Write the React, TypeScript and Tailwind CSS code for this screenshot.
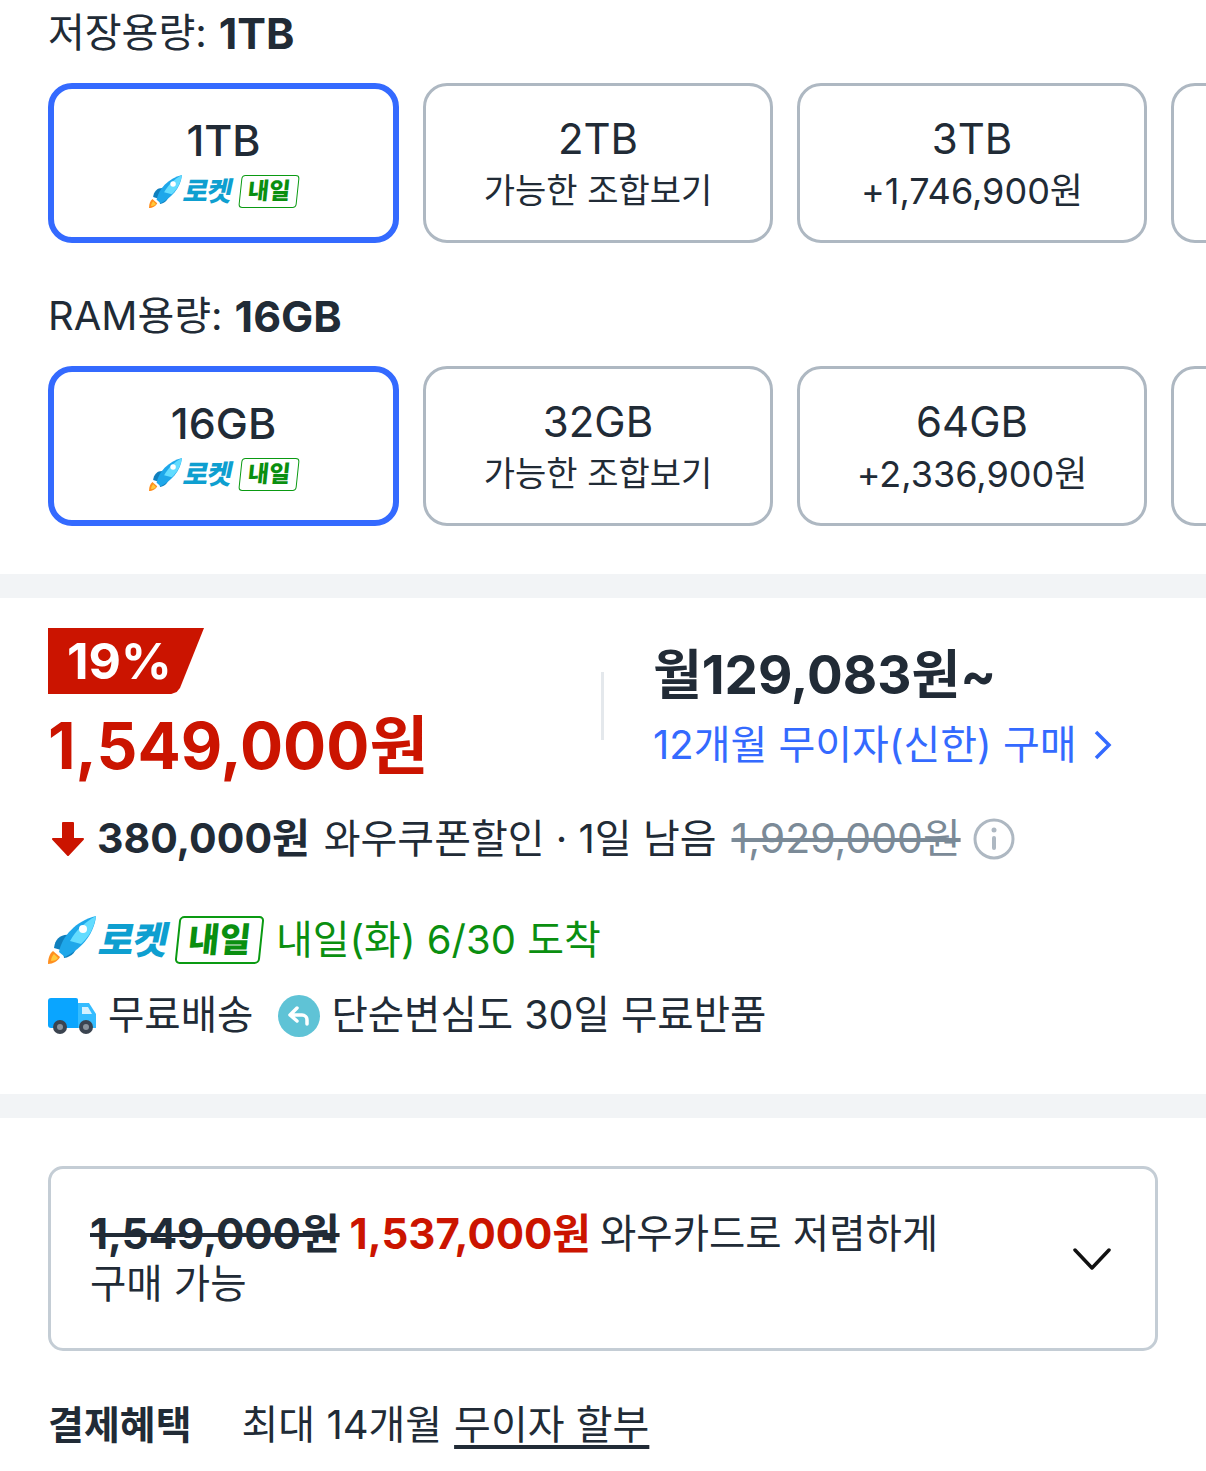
import React from 'react';

const FONT = "font-['Inter','Noto_Sans_CJK_KR',sans-serif]";

const RocketIcon = ({ className }: { className: string }) => (
  <svg viewBox="0 0 48 48" className={className}>
    <path d="M0 48c0-6 2-11 5-13l7 6c-2 4-7 7-12 7z" fill="#ff8f1f" />
    <path d="M3 45c0-3 2-6 3-7l4 4c-1 2-4 3-7 3z" fill="#ffc93c" />
    <path d="M6 32c1-9 7-14 15-13l-8 15z" fill="#0f7fbd" />
    <path d="M16 42c8-1 13-7 13-15l-14 8z" fill="#0f7fbd" />
    <path d="M11 36C14 20 28 5 48 0c-2 20-17 34-31 41z" fill="#1ea7ea" />
    <path d="M22 25C28 14 37 6 48 0c-2 12-7 21-15 28z" fill="#63dcff" />
    <circle cx="35" cy="13" r="4" fill="#fff" />
  </svg>
);

const RocketBadge = ({ large }: { large?: boolean }) =>
  large ? (
    <div className="flex items-center">
      <RocketIcon className="h-[48px] w-[48px]" />
      <span className="ml-[4px] inline-block -skew-x-12 text-[38px] leading-[48px] font-black tracking-[-1px] text-[#0e9fd0]">로켓</span>
      <span className="ml-[9px] flex h-[48px] w-[85px] -skew-x-6 items-center justify-center rounded-[5px] border-2 border-[#0a9a12] text-[34px] leading-none font-black text-[#0a8f10]">
        내일
      </span>
    </div>
  ) : (
    <div className="flex items-center">
      <RocketIcon className="h-[33px] w-[33px]" />
      <span className="ml-[2px] inline-block -skew-x-12 text-[27px] leading-[33px] font-black tracking-[-1px] text-[#0e9fd0]">로켓</span>
      <span className="ml-[8px] flex h-[33px] w-[58px] -skew-x-6 items-center justify-center rounded-[4px] border border-[#0a9a12] text-[23px] leading-none font-black text-[#0a8f10]">
        내일
      </span>
    </div>
  );

const OptionCard = ({ title, sub, subClass }: { title: string; sub: string; subClass: string }) => (
  <div className="flex h-[160px] w-[350px] shrink-0 flex-col items-center justify-center rounded-[24px] border-[3px] border-[#aeb8c2] pt-[2px]">
    <div className="text-[42px] leading-[54px]">{title}</div>
    <div className={`${subClass} leading-[50px]`}>{sub}</div>
  </div>
);

const OptionRow = ({ label, value, selected, mid, last }: { label: string; value: string; selected: string; mid: string; last: { title: string; sub: string } }) => (
  <div>
    <div className="flex h-[46px] items-center text-[40px] leading-[46px]">
      {label}:<span className="ml-[12px] text-[43px] font-bold">{value}</span>
    </div>
    <div className="mt-[27px] flex gap-[24px] overflow-hidden">
      <div className="flex h-[160px] w-[351px] shrink-0 flex-col items-center justify-center rounded-[24px] border-[6px] border-[#346aff] pb-[5px]">
        <div className="text-[43px] leading-[52px] font-medium">{selected}</div>
        <div className="mt-[9px]">
          <RocketBadge />
        </div>
      </div>
      <OptionCard title={mid} sub="가능한 조합보기" subClass="text-[34px]" />
      <OptionCard title={last.title} sub={last.sub} subClass="text-[36px]" />
      <div className="h-[160px] w-[350px] shrink-0 rounded-[24px] border-[3px] border-[#aeb8c2]" />
    </div>
  </div>
);

export default function App() {
  return (
    <div className={`${FONT} h-[1471px] overflow-hidden bg-white text-[#212b36]`}>
      <div className="pt-[10px] pl-[48px]">
        <OptionRow label="저장용량" value="1TB" selected="1TB" mid="2TB" last={{ title: '3TB', sub: '+1,746,900원' }} />
        <div className="mt-[50px]">
          <OptionRow label="RAM용량" value="16GB" selected="16GB" mid="32GB" last={{ title: '64GB', sub: '+2,336,900원' }} />
        </div>
      </div>

      <div className="mt-[48px] h-[24px] bg-[#f2f4f6]" />

      {/* price */}
      <div className="h-[496px] px-[48px] pt-[30px]">
        <div className="flex">
          <div className="w-[553px] shrink-0">
            <div className="flex h-[66px] w-[156px] items-center bg-[#cb1400] pl-[19px] text-[50px] leading-none font-bold text-white [clip-path:polygon(0_0,100%_0,84.6%_91%,82.5%_97%,79%_100%,0_100%)]">
              19%
            </div>
            <div className="mt-[15px] text-[64px] leading-[74px] font-bold text-[#cb1400]">1,549,000원</div>
          </div>
          <div className="mt-[44px] h-[68px] w-[3px] bg-[#e4e8ec]" />
          <div className="ml-[49px] pt-[15px]">
            <div className="text-[53px] leading-[64px] font-bold">월129,083원~</div>
            <div className="mt-[10px] flex items-center text-[40px] leading-[56px] text-[#346aff]">
              12개월 무이자(신한) 구매
              <svg viewBox="0 0 20 32" className="ml-[16px] h-[32px] w-[20px]" fill="none" stroke="#346aff" strokeWidth="3.5">
                <path d="M3 3l13 13L3 29" />
              </svg>
            </div>
          </div>
        </div>

        <div className="mt-[28px] flex h-[56px] items-center text-[40px]">
          <svg viewBox="0 0 34 34" className="ml-[3px] h-[34px] w-[34px]">
            <path d="M12 1h10v16h10L17 33 2 17h10z" fill="#cb1400" stroke="#cb1400" strokeWidth="2" strokeLinejoin="round" />
          </svg>
          <span className="ml-[12px] text-[41px] font-bold">380,000원</span>
          <span className="ml-[14px]">와우쿠폰할인 · 1일 남음</span>
          <span className="ml-[15px] text-[41px] text-[#7b8a97] line-through">1,929,000원</span>
          <svg viewBox="0 0 42 42" className="ml-[12px] h-[42px] w-[42px]" fill="none">
            <circle cx="21" cy="21" r="19" stroke="#aeb8c2" strokeWidth="3" />
            <circle cx="21" cy="12" r="2.5" fill="#aeb8c2" />
            <rect x="19" y="18" width="4" height="14" rx="2" fill="#aeb8c2" />
          </svg>
        </div>

        <div className="mt-[48px] flex h-[50px] items-center">
          <RocketBadge large />
          <span className="ml-[14px] text-[40px] text-[#0a8f10]">내일(화) 6/30 도착</span>
        </div>

        <div className="mt-[26px] flex h-[50px] items-center text-[39.5px]">
          <svg viewBox="0 0 48 36" className="h-[36px] w-[48px]">
            <path d="M0 3a3 3 0 0 1 3-3h25a2 2 0 0 1 2 2v28H3a3 3 0 0 1-3-3z" fill="#0aa5ff" />
            <path d="M30 5h11l7 11v14H30z" fill="#35bcff" />
            <path d="M34 9h6l4 7H34z" fill="#d5f1ff" />
            <circle cx="12" cy="29" r="7" fill="#3b4450" />
            <circle cx="12" cy="29" r="3" fill="#8a939c" />
            <circle cx="38" cy="29" r="7" fill="#3b4450" />
            <circle cx="38" cy="29" r="3" fill="#8a939c" />
          </svg>
          <span className="ml-[12px]">무료배송</span>
          <svg viewBox="0 0 42 42" className="ml-[25px] h-[42px] w-[42px]">
            <circle cx="21" cy="21" r="21" fill="#5fc3d6" />
            <path d="M19 13l-7 7 7 6M12 20h12a5 5 0 0 1 5 5v4" fill="none" stroke="#fff" strokeWidth="3.5" strokeLinecap="round" strokeLinejoin="round" />
          </svg>
          <span className="ml-[11px]">단순변심도 30일 무료반품</span>
        </div>
      </div>

      <div className="h-[24px] bg-[#f2f4f6]" />

      {/* wow card */}
      <div className="px-[48px] pt-[48px]">
        <div className="flex h-[185px] w-[1110px] items-center justify-between rounded-[15px] border-[3px] border-[#c4cdd5] pr-[44px] pl-[39px]">
          <div className="text-[39.5px] leading-[50px]">
            <div className="flex">
              <span className="text-[42px] font-bold line-through">1,549,000원</span>
              <span className="ml-[10px] text-[42px] font-bold text-[#cb1400]">1,537,000원</span>
              <span className="ml-[9px]">와우카드로 저렴하게</span>
            </div>
            <div>구매 가능</div>
          </div>
          <svg viewBox="0 0 38 24" className="h-[24px] w-[38px]" fill="none" stroke="#111" strokeWidth="3.5" strokeLinecap="round" strokeLinejoin="round">
            <path d="M2 3l17 18L36 3" />
          </svg>
        </div>

        <div className="mt-[48px] flex h-[52px] items-center text-[40px]">
          <span className="text-[39px] font-bold">결제혜택</span>
          <span className="ml-[50px]">최대 14개월</span>
          <span className="ml-[12px] underline underline-offset-[6px]">무이자 할부</span>
        </div>
      </div>
    </div>
  );
}
